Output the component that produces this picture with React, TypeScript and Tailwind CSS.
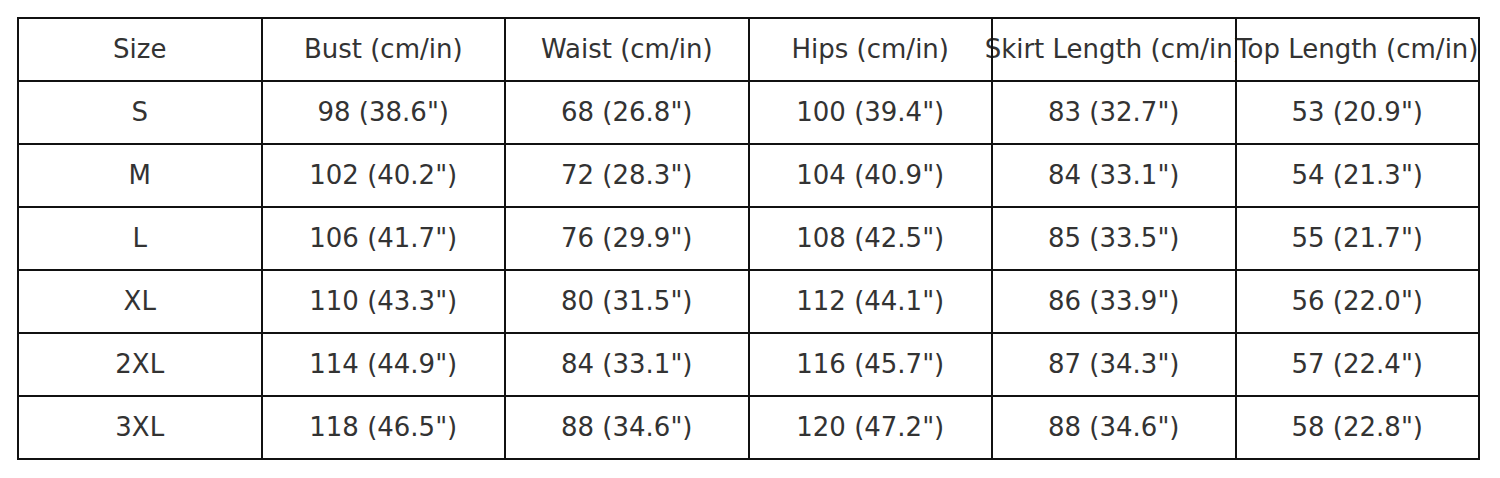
import React from 'react';

const headers = ['Size', 'Bust (cm/in)', 'Waist (cm/in)', 'Hips (cm/in)', 'Skirt Length (cm/in)', 'Top Length (cm/in)'];

const rows = [
  ['S', '98 (38.6")', '68 (26.8")', '100 (39.4")', '83 (32.7")', '53 (20.9")'],
  ['M', '102 (40.2")', '72 (28.3")', '104 (40.9")', '84 (33.1")', '54 (21.3")'],
  ['L', '106 (41.7")', '76 (29.9")', '108 (42.5")', '85 (33.5")', '55 (21.7")'],
  ['XL', '110 (43.3")', '80 (31.5")', '112 (44.1")', '86 (33.9")', '56 (22.0")'],
  ['2XL', '114 (44.9")', '84 (33.1")', '116 (45.7")', '87 (34.3")', '57 (22.4")'],
  ['3XL', '118 (46.5")', '88 (34.6")', '120 (47.2")', '88 (34.6")', '58 (22.8")'],
];

const Cell = ({ text }: { text: string }) => (
  <div className="relative h-[63px] bg-white flex items-center justify-center">
    <span className="whitespace-nowrap">{text}</span>
    <div className="absolute -inset-px border-2 border-[#111111]" />
  </div>
);

export default function App() {
  return (
    <div className="w-[1500px] h-[478px] bg-white pt-[18px] pl-[18px] font-['DejaVu_Sans',sans-serif] text-[26px] text-[#333333]">
      <div className="grid grid-cols-6 w-[1461px]">
        {headers.map((h) => (
          <Cell key={h} text={h} />
        ))}
        {rows.map((r) => r.map((c, i) => <Cell key={r[0] + i} text={c} />))}
      </div>
    </div>
  );
}
